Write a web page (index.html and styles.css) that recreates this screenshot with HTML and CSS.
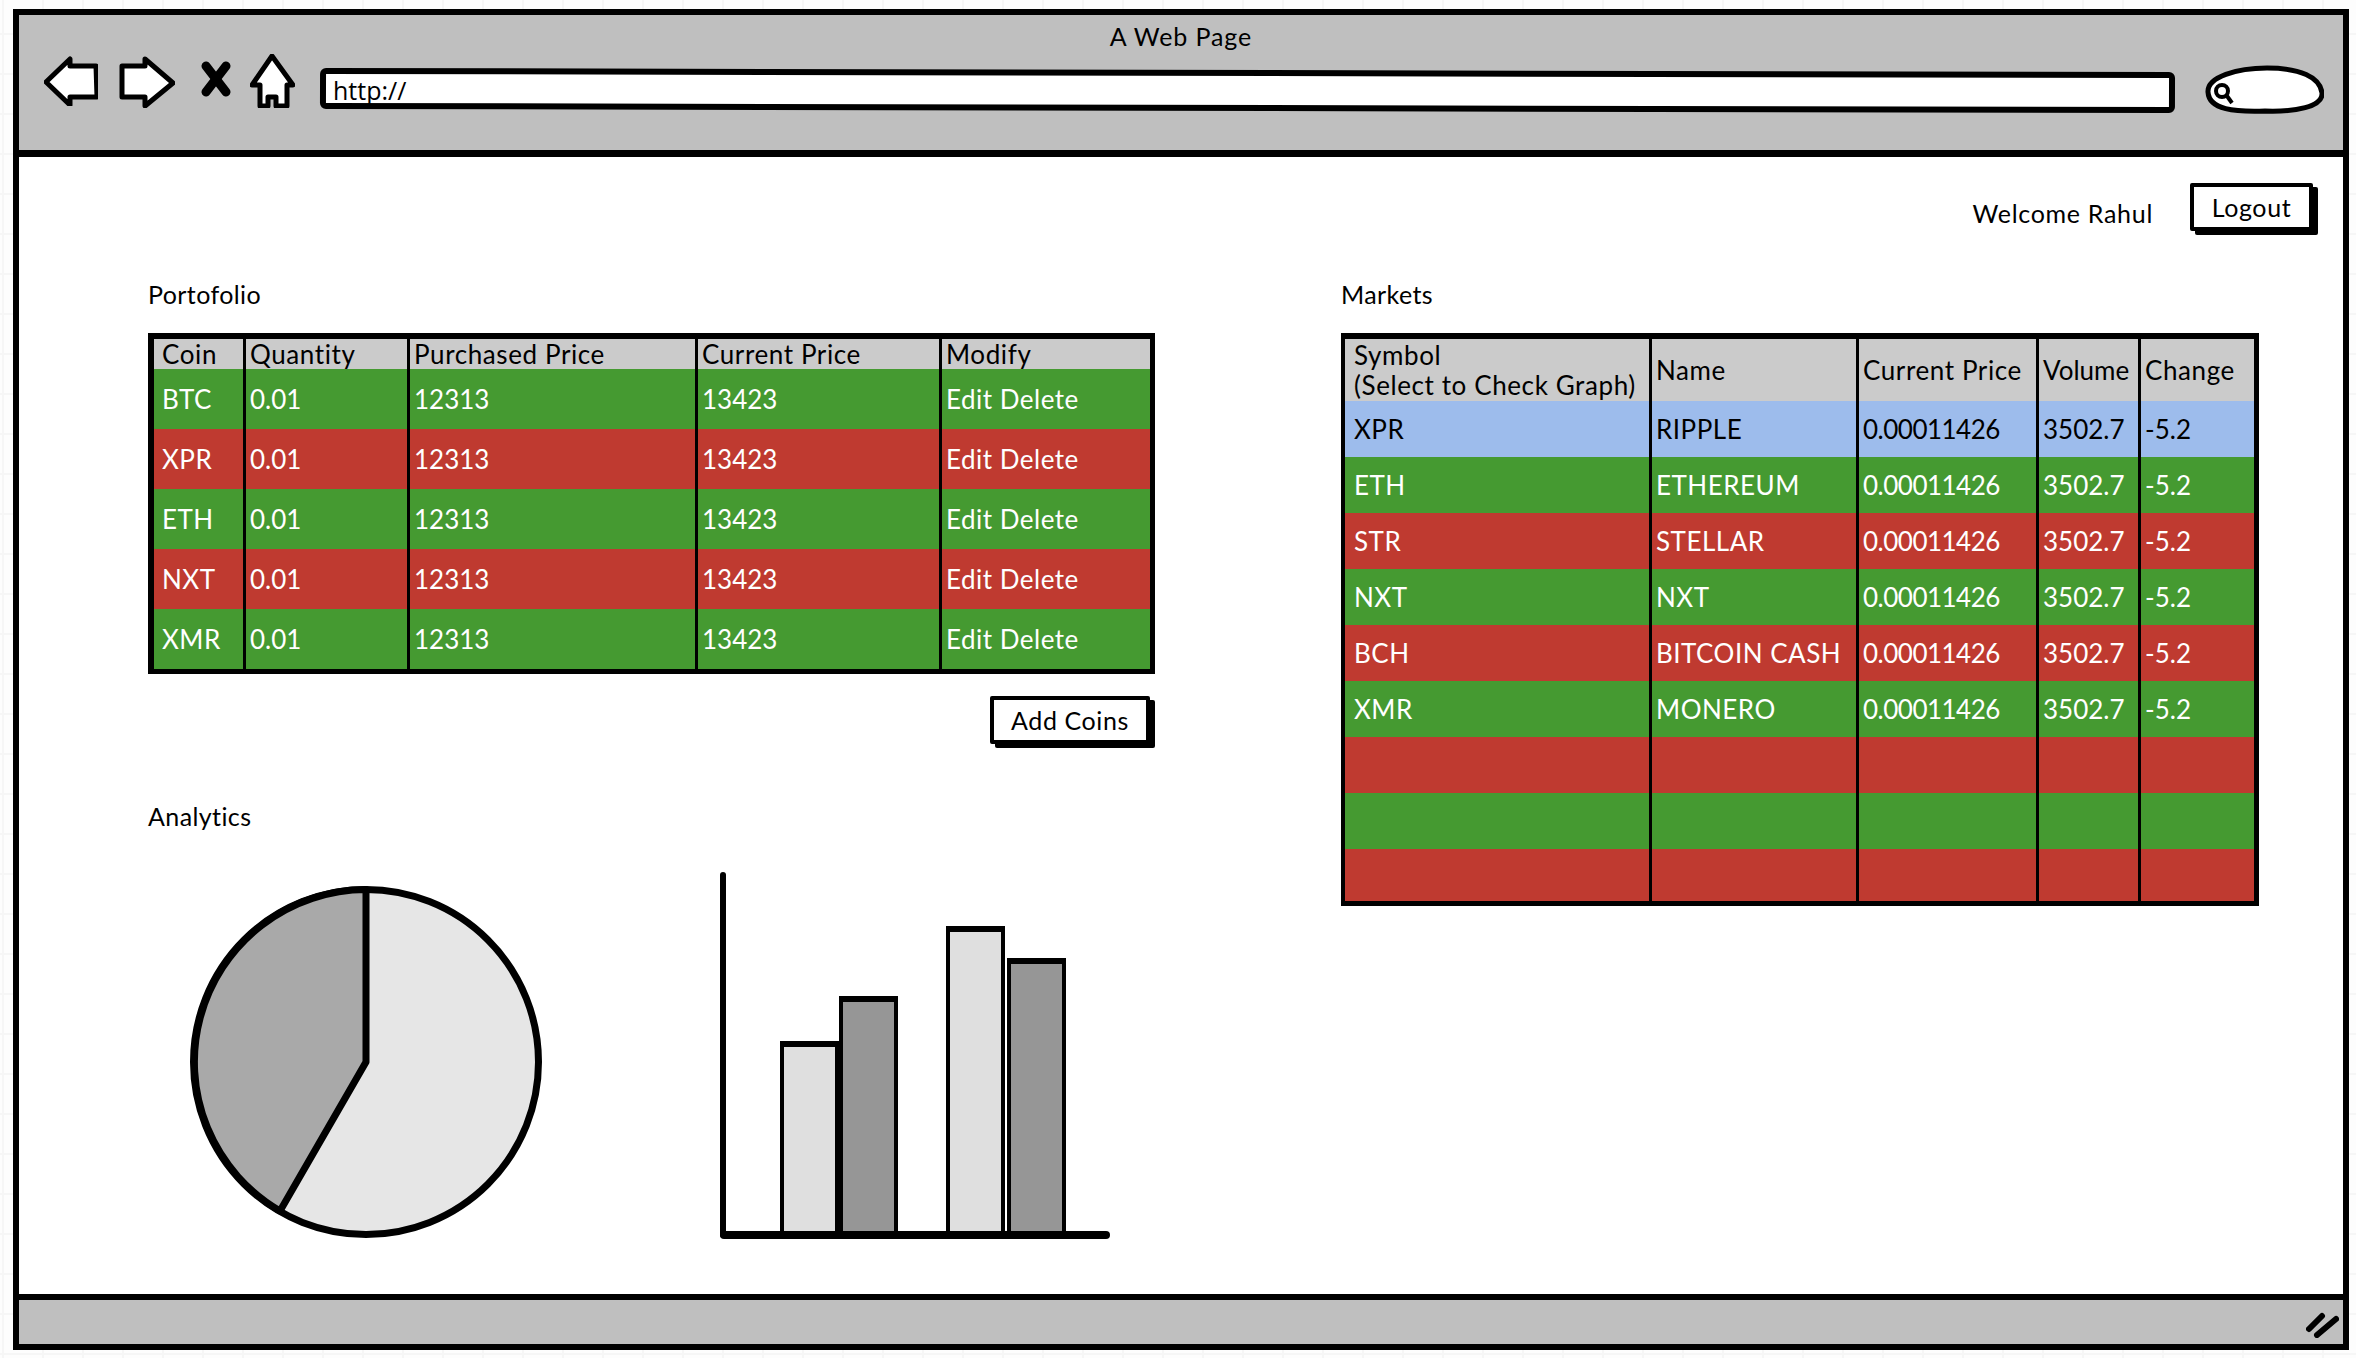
FILE: index.html
```html
<!DOCTYPE html>
<html lang="en">
<head>
    <meta charset="UTF-8"/>
    <meta name="viewport" content="width=device-width, initial-scale=1.0"/>
    <title>A Web Page</title>
    <link rel="stylesheet" href="styles.css">
</head>
<body>
<div class="window">
    <div class="toolbar">
        <div class="page-title">A Web Page</div>
        <div class="nav">
            <svg class="icon back" width="54" height="50" viewBox="0 0 54 50"><path d="M2 26 L26 3 L26 10 L52 10 L53 41 L26 41 L26 49 Z"/></svg>
            <svg class="icon forward" width="56" height="52" viewBox="0 0 56 52"><path d="M3 10 L26 10 L26 3 L54 27 L26 50 L26 41 L3 41 Z"/></svg>
            <svg class="stop" width="32" height="38" viewBox="0 0 32 38"><path d="M6 6 L26 32"/><path d="M26 6 L6 32"/></svg>
            <svg class="icon home" width="45" height="54" viewBox="0 0 45 54"><path d="M22 2 L43 31 L37 31 L37 52 L26 52 L26 43 L18 43 L18 52 L10 52 L10 31 L2 31 Z"/></svg>
            <div class="url-bar">http://</div>
            <svg class="icon search" width="119" height="50" viewBox="0 0 119 50">
                <path d="M3 27 C2 12 32 3 62 3 C95 3 115 12 117 28 C118 42 90 47 60 46 C30 47 4 45 3 27 Z"/>
                <circle class="lens" cx="17" cy="26" r="6"/>
                <path class="lens" d="M22 31 L27 38"/>
            </svg>
        </div>
    </div>

    <div class="content">
        <div class="user-row">
            <span class="welcome">Welcome Rahul</span>
            <button class="btn">Logout</button>
        </div>

        <div class="columns">
            <div class="col-left">
                <h2 class="section-title">Portofolio</h2>
                <table class="grid portfolio">
                    <colgroup>
                        <col class="p1"><col class="p2"><col class="p3"><col class="p4"><col class="p5">
                    </colgroup>
                    <thead>
                        <tr><th>Coin</th><th>Quantity</th><th>Purchased Price</th><th>Current Price</th><th>Modify</th></tr>
                    </thead>
                    <tbody>
                        <tr class="up"><td>BTC</td><td>0.01</td><td>12313</td><td>13423</td><td>Edit Delete</td></tr>
                        <tr class="down"><td>XPR</td><td>0.01</td><td>12313</td><td>13423</td><td>Edit Delete</td></tr>
                        <tr class="up"><td>ETH</td><td>0.01</td><td>12313</td><td>13423</td><td>Edit Delete</td></tr>
                        <tr class="down"><td>NXT</td><td>0.01</td><td>12313</td><td>13423</td><td>Edit Delete</td></tr>
                        <tr class="up"><td>XMR</td><td>0.01</td><td>12313</td><td>13423</td><td>Edit Delete</td></tr>
                    </tbody>
                </table>
                <div class="table-actions">
                    <button class="btn add-btn">Add Coins</button>
                </div>

                <h2 class="section-title analytics-title">Analytics</h2>
                <div class="charts">
                    <svg class="pie" width="352" height="354" viewBox="0 0 352 354">
                        <circle class="pie-light" cx="176" cy="177" r="172.5"/>
                        <path class="pie-dark" d="M176 177 L176 4.5 A172.5 172.5 0 0 0 90 326 Z"/>
                    </svg>
                    <svg class="bars" width="390" height="367" viewBox="0 0 390 367">
                        <rect class="bar-light" x="62" y="172" width="55" height="189"/>
                        <rect class="bar-dark" x="121" y="127" width="55" height="234"/>
                        <rect class="bar-light" x="228" y="57" width="55" height="304"/>
                        <rect class="bar-dark" x="289" y="89" width="55" height="272"/>
                        <path class="bar-tops" d="M60 172 H119 M119 127 H178 M226 57 H285 M287 89 H346"/>
                        <path class="axis-y" d="M3 3 L3 363"/>
                        <path class="axis-x" d="M4 363 L386 363"/>
                    </svg>
                </div>
            </div>

            <div class="col-right">
                <h2 class="section-title">Markets</h2>
                <table class="grid markets">
                    <colgroup>
                        <col class="m1"><col class="m2"><col class="m3"><col class="m4"><col class="m5">
                    </colgroup>
                    <thead>
                        <tr><th>Symbol<br>(Select to Check Graph)</th><th>Name</th><th>Current Price</th><th>Volume</th><th>Change</th></tr>
                    </thead>
                    <tbody>
                        <tr class="selected"><td>XPR</td><td>RIPPLE</td><td>0.00011426</td><td>3502.7</td><td>-5.2</td></tr>
                        <tr class="up"><td>ETH</td><td>ETHEREUM</td><td>0.00011426</td><td>3502.7</td><td>-5.2</td></tr>
                        <tr class="down"><td>STR</td><td>STELLAR</td><td>0.00011426</td><td>3502.7</td><td>-5.2</td></tr>
                        <tr class="up"><td>NXT</td><td>NXT</td><td>0.00011426</td><td>3502.7</td><td>-5.2</td></tr>
                        <tr class="down"><td>BCH</td><td>BITCOIN CASH</td><td>0.00011426</td><td>3502.7</td><td>-5.2</td></tr>
                        <tr class="up"><td>XMR</td><td>MONERO</td><td>0.00011426</td><td>3502.7</td><td>-5.2</td></tr>
                        <tr class="down"><td></td><td></td><td></td><td></td><td></td></tr>
                        <tr class="up"><td></td><td></td><td></td><td></td><td></td></tr>
                        <tr class="down"><td></td><td></td><td></td><td></td><td></td></tr>
                    </tbody>
                </table>
            </div>
        </div>
    </div>

    <div class="statusbar">
        <svg class="grip" width="33" height="26" viewBox="0 0 33 26"><path d="M3 17 L16 4"/><path d="M11 23 L30 7"/></svg>
    </div>
</div>
</body>
</html>
```

FILE: styles.css
```css
* {
    box-sizing: border-box;
}
body {
    margin: 0;
    background-color: #fdfdfd;
    background-image: linear-gradient(#f6f6f6 2px, transparent 2px), linear-gradient(90deg, #f6f6f6 2px, transparent 2px);
    background-size: 40px 40px;
    background-position: 2px 33px;
    font-family: Lato, "Open Sans", sans-serif;
    font-size: 25px;
    color: #000;
}
.window {
    width: 2336px;
    height: 1341px;
    margin: 9px 0 0 13px;
    border: 6px solid #000;
    background: #fff;
    display: flex;
    flex-direction: column;
}

/* browser chrome */
.toolbar {
    height: 142px;
    flex-shrink: 0;
    background: #bfbfbf;
    border-bottom: 7px solid #000;
}
.page-title {
    height: 39px;
    line-height: 42px;
    text-align: center;
    letter-spacing: 0.9px;
}
.nav {
    display: flex;
    align-items: flex-start;
    height: 62px;
    padding: 0 19px 0 25px;
}
.icon path {
    fill: #fff;
    stroke: #000;
    stroke-width: 5;
    stroke-linejoin: round;
}
.back {
    margin-top: 2px;
}
.forward {
    margin: 2px 0 0 21px;
}
.stop {
    margin: 6px 18px 0 25px;
}
.stop path {
    stroke: #000;
    stroke-width: 9;
    stroke-linecap: round;
}
.url-bar {
    position: relative;
    flex: 1;
    height: 41px;
    margin: 16px 0 0 25px;
    padding-left: 13px;
    line-height: 40px;
    font-family: "Open Sans", sans-serif;
    z-index: 0;
}
.url-bar::before {
    content: "";
    position: absolute;
    inset: 0;
    z-index: -1;
    background: #fff;
    border: 6px solid #000;
    border-radius: 6px;
    transform: rotate(0.13deg);
}
.search {
    margin: 11px 0 0 30px;
}
.search .lens {
    fill: none;
    stroke: #000;
    stroke-width: 4;
}

/* page */
.content {
    flex: 1;
    padding: 26px 25px 0 129px;
}
.user-row {
    display: flex;
    justify-content: flex-end;
    align-items: flex-start;
    gap: 37px;
    padding-right: 5px;
}
.welcome {
    margin-top: 15px;
    letter-spacing: 0.7px;
}
.btn {
    width: 123px;
    height: 48px;
    padding: 0;
    background: #fff;
    border: 4px solid #000;
    border-radius: 2px;
    box-shadow: 5px 4px 0 #000;
    font-family: inherit;
    font-size: 25px;
    letter-spacing: 0.6px;
    color: #000;
}
.columns {
    display: flex;
    gap: 186px;
    margin-top: 45px;
}
.section-title {
    margin: 0 0 28px;
    height: 29px;
    line-height: 36px;
    font-size: 25px;
    font-weight: normal;
    letter-spacing: 0.4px;
}

/* tables */
.grid {
    table-layout: fixed;
    border-collapse: separate;
    border-spacing: 0;
    border: solid #000;
    border-width: 6px 5px 5px 6px;
    font-size: 26px;
}
.grid th, .grid td {
    padding: 0 0 0 4px;
    border-left: 3px solid #000;
    text-align: left;
    font-weight: normal;
    white-space: nowrap;
}
.grid th {
    background: #cbcbcb;
    letter-spacing: 0.6px;
}
.grid td {
    color: #fff;
    letter-spacing: 0.5px;
}
.grid th:first-child, .grid td:first-child {
    border-left: 0;
    padding-left: 8px;
}
.up td {
    background: #459a31;
}
.down td {
    background: #bf3a30;
}
.grid .selected td {
    background: #9dbcec;
    color: #000;
}
.portfolio {
    width: 1007px;
}
.portfolio th {
    height: 30px;
    line-height: 30px;
}
.portfolio td {
    height: 60px;
}
.portfolio td:nth-child(2), .portfolio td:nth-child(3), .portfolio td:nth-child(4) {
    letter-spacing: 0;
}
.p1 { width: 89px; }
.p2 { width: 164px; }
.p3 { width: 288px; }
.p4 { width: 244px; }
.p5 { width: 211px; }
.markets {
    width: 918px;
    border-left-width: 4px;
}
.markets th {
    height: 62px;
    line-height: 30px;
}
.markets td {
    height: 56px;
}
.markets tr:last-child td {
    height: 52px;
}
.markets th:first-child, .markets td:first-child {
    padding-left: 9px;
}
.markets th:nth-child(4) {
    letter-spacing: 0;
}
.markets td:nth-child(3) {
    letter-spacing: -0.5px;
}
.markets td:nth-child(4), .markets td:nth-child(5) {
    letter-spacing: 0;
}
.m1 { width: 304px; }
.m2 { width: 207px; }
.m3 { width: 180px; }
.m4 { width: 102px; }
.m5 { width: 116px; }
.table-actions {
    display: flex;
    justify-content: flex-end;
    margin-top: 22px;
    padding-right: 5px;
}
.add-btn {
    width: 160px;
}
.analytics-title {
    margin: 54px 0 45px;
}

/* charts */
.charts {
    display: flex;
    align-items: flex-end;
    gap: 178px;
    padding-left: 42px;
}
.pie circle, .pie path {
    stroke: #000;
    stroke-width: 7;
    stroke-linejoin: round;
}
.pie-light {
    fill: #e6e6e6;
}
.pie-dark {
    fill: #a9a9a9;
}
.bars rect {
    stroke: #000;
    stroke-width: 4;
}
.bar-light {
    fill: #dfdfdf;
}
.bar-dark {
    fill: #969696;
}
.bar-tops {
    stroke: #000;
    stroke-width: 6;
}
.axis-y, .axis-x {
    stroke: #000;
    stroke-linecap: round;
    fill: none;
}
.axis-y {
    stroke-width: 6;
}
.axis-x {
    stroke-width: 8;
}

/* bottom bar */
.statusbar {
    height: 50px;
    flex-shrink: 0;
    display: flex;
    justify-content: flex-end;
    align-items: center;
    padding: 6px 4px 0 0;
    background: #bfbfbf;
    border-top: 6px solid #000;
}
.grip path {
    stroke: #000;
    stroke-width: 6;
    stroke-linecap: round;
}
```
